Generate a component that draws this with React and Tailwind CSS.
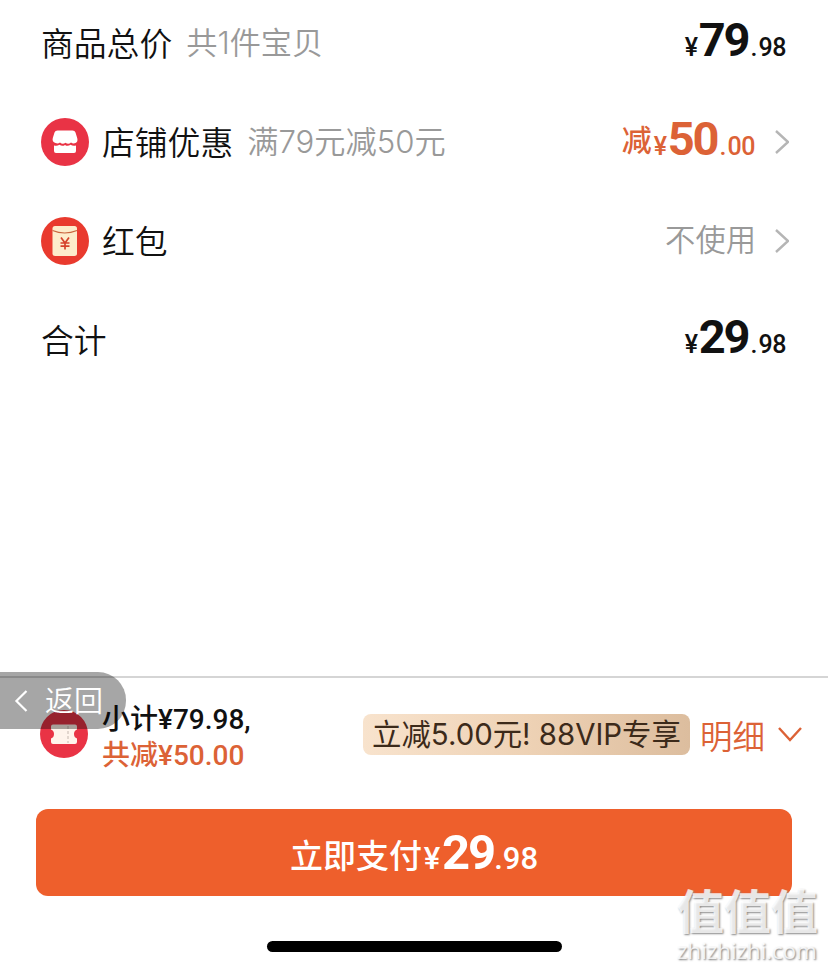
import React from 'react';

const orange = 'text-[#dc6236]';

function Price({ whole, cents, className }) {
  return (
    <span className={`flex items-baseline pb-[7px] font-['Roboto','Noto_Sans_CJK_SC',sans-serif] leading-none font-medium ${className}`}>
      <span className="w-[14px] text-[25px] tracking-tight">¥</span>
      <span className="text-[47px] font-bold tracking-[-2px]">{whole}</span>
      <span className="w-[10px] pl-[2px] text-[25px]">.</span>
      <span className="text-[25px] tracking-[-0.5px]">{cents}</span>
    </span>
  );
}

function Chevron({ className, points = '1,1 13,12 1,23', box = '0 0 14 24' }) {
  return (
    <svg viewBox={box} className={className} fill="none" stroke="currentColor" strokeWidth="2.4">
      <polyline points={points} />
    </svg>
  );
}

function ShopIcon() {
  return (
    <svg viewBox="0 0 48 48" className="size-12">
      <circle cx="24" cy="24" r="24" fill="#e93345" />
      <path d="M16.500 12.500h15q2.300 0 3 2l1.700 5.500q1 4-1.700 5-2.500 1-4.500-.6-2.500 2.300-5.500.3-3 2-5.500-.3-2 1.600-4.500.6-3.700-1-2.700-5l1.700-5.500q.7-2 3-2z" fill="#fff" />
      <path d="M13 27.500q3 1 5.500-.8 2.800 2 5.500.2 2.700 1.800 5.500-.2 2.500 1.800 5.500.8v5.500q0 2-2 2H15q-2 0-2-2z" fill="#fff" />
    </svg>
  );
}

function PacketIcon() {
  return (
    <svg viewBox="0 0 48 48" className="size-12">
      <circle cx="24" cy="24" r="24" fill="#e93a2e" />
      <rect x="11.500" y="9" width="24.500" height="30" rx="2.500" fill="#fdeccb" />
      <path d="M11.500 13.500q12 5 24.500 0" fill="none" stroke="#c9653f" strokeWidth="1.200" />
      <path d="M20 20.500l4 5.500 4-5.500M19.500 26h9M19.500 29.200h9M24 26v6.500" fill="none" stroke="#d5432c" strokeWidth="1.700" />
    </svg>
  );
}

function CouponIcon() {
  return (
    <svg viewBox="0 0 48 48" className="size-12 shrink-0">
      <circle cx="24" cy="24" r="24" fill="#e93345" />
      <path d="M13 14.500h22q2 0 2 2v3q-3 1-3 4.500t3 4.500v3.500q0 2-2 2H13q-2 0-2-2v-3.500q3-1 3-4.500t-3-4.500v-3q0-2 2-2z" fill="#fff4ec" />
      <path d="M28 16v17" stroke="#d9cbc4" strokeWidth="1.500" strokeDasharray="3 2" />
    </svg>
  );
}

function Row({ icon, label, note, children }) {
  return (
    <div className="flex h-[82px] items-center pr-[39px] pl-[41px]">
      {icon && <span className="mr-[13px]">{icon}</span>}
      <span className="pt-[4px] text-[32.8px] text-[#111]">{label}</span>
      {note && <span className="ml-[14px] text-[31.2px] text-[#999]">{note}</span>}
      <div className="ml-auto flex items-center">{children}</div>
    </div>
  );
}

export default function App() {
  return (
    <div className="relative flex h-[969px] w-[828px] flex-col overflow-hidden bg-white font-['Inter','Noto_Sans_CJK_SC',sans-serif] font-[350] whitespace-nowrap">
      <main className="flex h-[676px] flex-col gap-[17px] pt-[2px]">
        <Row label="商品总价" note="共1件宝贝">
          <Price whole="79" cents="98" className="mr-[3px] text-[#111]" />
        </Row>
        <Row icon={<ShopIcon />} label="店铺优惠" note="满79元减50元">
          <span className={`mr-[2px] pb-[4px] text-[30px] font-medium ${orange}`}>减</span>
          <Price whole="50" cents="00" className={orange} />
          <Chevron className="ml-5 h-6 w-[14px] text-[#b5b5b5]" />
        </Row>
        <Row icon={<PacketIcon />} label="红包">
          <span className="text-[30.3px] text-[#999]">不使用</span>
          <Chevron className="ml-[19px] h-6 w-[14px] text-[#b5b5b5]" />
        </Row>
        <Row label="合计">
          <Price whole="29" cents="98" className="mr-[3px] text-[#111]" />
        </Row>
      </main>

      <footer className="flex flex-1 flex-col border-t-2 border-[#d5d5d5]">
        <div className="mb-[19px] flex h-[112px] items-center pr-[26px] pl-[40px]">
          <CouponIcon />
          <div className="ml-[14px] pt-[8px] font-['Roboto','Noto_Sans_CJK_SC',sans-serif] text-[28px] leading-[36px] font-medium">
            <p className="text-[#111]">小计¥79.98,</p>
            <p className={orange}>共减¥50.00</p>
          </div>
          <span className="mr-[1px] ml-auto flex h-[41px] w-[327px] items-center justify-center rounded-lg bg-linear-to-r from-[#f8e3cd] via-[#eed2b5] to-[#dcbd9e] pt-[3px] text-[29.4px] font-normal text-[#3c2a1a]">
            立减5.00元! 88VIP专享
          </span>
          <span className={`ml-[9px] pt-[8px] text-[32.5px] ${orange}`}>明细</span>
          <Chevron box="0 0 24 16" points="1,2 12,14 23,2" className={`ml-[13px] h-4 w-6 ${orange}`} />
        </div>
        <button className="mr-[36px] ml-[36px] flex h-[87px] items-center justify-center rounded-xl bg-[#ee5f2c] text-white">
          <span className="pt-[9px] text-[33px] font-medium">立即支付</span>
          <span className="flex items-baseline font-['Roboto','Noto_Sans_CJK_SC',sans-serif] leading-none font-medium">
            <span className="w-[20px] text-center text-[31px]">¥</span>
            <span className="text-[49px] font-bold tracking-[-2px]">29</span>
            <span className="text-[31px]">.98</span>
          </span>
        </button>
        <div className="mt-[45px] ml-[267px] h-[11px] w-[295px] rounded-full bg-black" />
      </footer>

      {/* floating back pill */}
      <div className="absolute top-[672px] left-0 flex h-[57px] w-[126px] items-center rounded-r-[28px] bg-black/35 text-white">
        <Chevron points="13,1 2,12 13,23" className="ml-[14px] h-[22px] w-[14px]" />
        <span className="ml-[17px] pt-[2px] text-[29px]">返回</span>
      </div>

      <div className="absolute top-[884px] left-[677px] w-[146px] text-white/80">
        <p className="text-[47px] leading-[56px] font-bold [text-shadow:1px_1px_2px_#888]">值值值</p>
        <p className="font-['Open_Sans',sans-serif] text-[22.3px] leading-[22px] font-medium [text-shadow:1px_1px_2px_#777]">zhizhizhi.com</p>
      </div>
    </div>
  );
}
